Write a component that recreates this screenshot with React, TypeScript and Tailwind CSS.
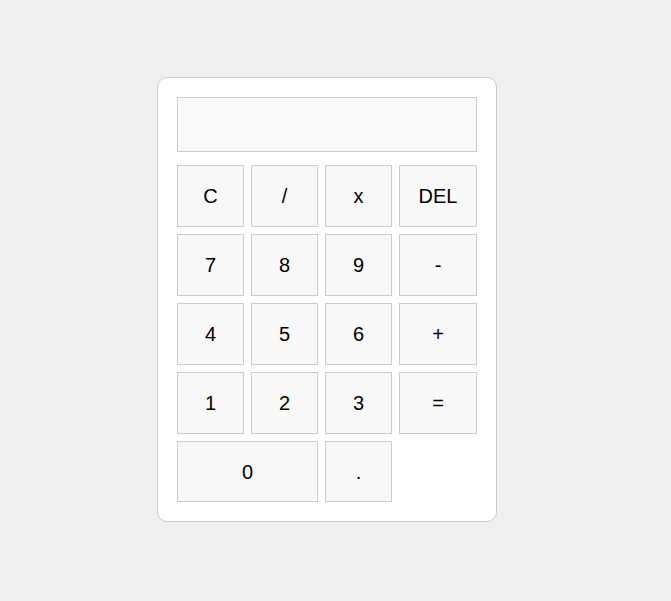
const KEYS: { label: string; wide?: boolean }[] = [
  { label: "C" },
  { label: "/" },
  { label: "x" },
  { label: "DEL" },
  { label: "7" },
  { label: "8" },
  { label: "9" },
  { label: "-" },
  { label: "4" },
  { label: "5" },
  { label: "6" },
  { label: "+" },
  { label: "1" },
  { label: "2" },
  { label: "3" },
  { label: "=" },
  { label: "0", wide: true },
  { label: "." },
];

export default function App() {
  return (
    <div className="min-h-screen bg-[#f0f0f0] pl-[157px] pt-[77px] font-['Liberation_Sans',Arial,sans-serif]">
      <div className="w-[340px] rounded-[10px] border border-[#cccccc] bg-white p-[19px]">
        <input
          readOnly
          value=""
          className="mb-[13px] block h-[55px] w-full border border-[#cccccc] bg-[#f9f9f9] px-2 text-right text-2xl outline-none"
        />
        <div className="grid grid-cols-[1fr_1fr_1fr_78px] auto-rows-[61.9px] gap-[7px]">
          {KEYS.map((k) => (
            <button
              key={k.label}
              className={`border border-[#cccccc] bg-[#f8f8f8] text-[20px] text-black ${
                k.wide ? "col-span-2" : ""
              }`}
            >
              {k.label}
            </button>
          ))}
        </div>
      </div>
    </div>
  );
}
